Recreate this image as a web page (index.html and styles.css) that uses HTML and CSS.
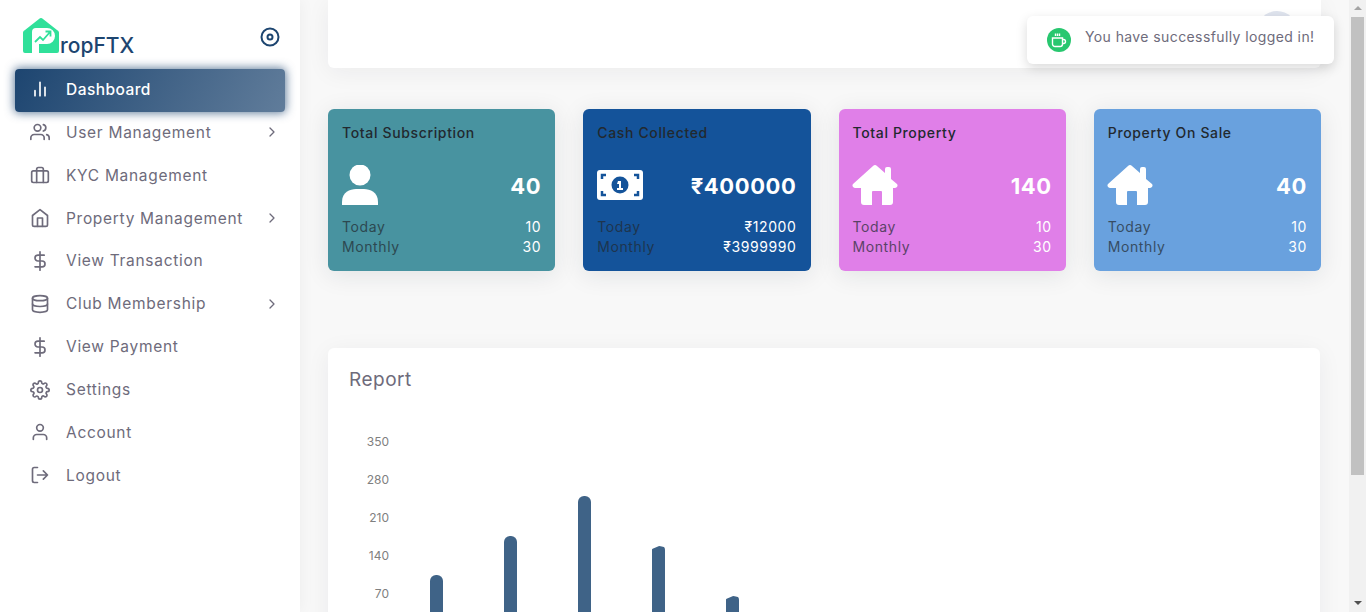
FILE: index.html
```html
<!DOCTYPE html>
<html lang="en">
  <head>
    <meta charset="UTF-8" />
    <title>PropFTX Dashboard</title>
    <link rel="stylesheet" href="styles.css">
  </head>
  <body>
    <aside class="sidebar">
      <div class="brand">
        <div class="logo">
          <svg class="logo-mark" viewBox="0 0 36 35" width="36" height="35">
            <path fill="#30e09a" d="M16 1a3 3 0 0 1 4 0l14 11a3 3 0 0 1 2 3v18a2 2 0 0 1-2 2H2a2 2 0 0 1-2-2V15a3 3 0 0 1 2-3z"/>
            <path fill="#fff" d="M9 14a4 4 0 0 1 4-4h11a8 8 0 0 1 8 8 8 8 0 0 1-8 8h-8v9H9z"/>
            <path fill="none" stroke="#30e09a" stroke-width="1.800" d="M12 24l5-5 3 3 7-8M22.500 13.500h5v5"/>
          </svg>
          <span class="logo-text">ropFTX</span>
        </div>
        <svg class="toggle" viewBox="0 0 20 20" width="20" height="20" fill="none" stroke="#1d4570" stroke-width="2">
          <circle cx="10" cy="10" r="8.500"/>
          <circle cx="10" cy="10" r="2.500"/>
        </svg>
      </div>
      <nav class="menu">
        <a class="item active">
          <svg viewBox="0 0 24 24"><path d="M18 20V10M12 20V4M6 20v-6"/></svg>
          <span>Dashboard</span>
        </a>
        <a class="item">
          <svg viewBox="0 0 24 24"><path d="M17 21v-2a4 4 0 0 0-4-4H5a4 4 0 0 0-4 4v2"/><circle cx="9" cy="7" r="4"/><path d="M23 21v-2a4 4 0 0 0-3-3.870M16 3.130a4 4 0 0 1 0 7.750"/></svg>
          <span>User Management</span>
          <svg class="chev" viewBox="0 0 10 10"><path d="M3 1l4 4-4 4"/></svg>
        </a>
        <a class="item">
          <svg viewBox="0 0 24 24"><rect x="2" y="7" width="20" height="14" rx="2"/><path d="M16 21V5a2 2 0 0 0-2-2h-4a2 2 0 0 0-2 2v16"/></svg>
          <span>KYC Management</span>
        </a>
        <a class="item">
          <svg viewBox="0 0 24 24"><path d="M3 9l9-7 9 7v11a2 2 0 0 1-2 2H5a2 2 0 0 1-2-2z"/><path d="M9 22V12h6v10"/></svg>
          <span>Property Management</span>
          <svg class="chev" viewBox="0 0 10 10"><path d="M3 1l4 4-4 4"/></svg>
        </a>
        <a class="item">
          <svg viewBox="0 0 24 24"><path d="M12 1v22M17 5H9.500a3.500 3.500 0 0 0 0 7h5a3.500 3.500 0 0 1 0 7H6"/></svg>
          <span>View Transaction</span>
        </a>
        <a class="item">
          <svg viewBox="0 0 24 24"><ellipse cx="12" cy="5" rx="9" ry="3"/><path d="M21 12c0 1.660-4 3-9 3s-9-1.340-9-3"/><path d="M3 5v14c0 1.660 4 3 9 3s9-1.340 9-3V5"/></svg>
          <span>Club Membership</span>
          <svg class="chev" viewBox="0 0 10 10"><path d="M3 1l4 4-4 4"/></svg>
        </a>
        <a class="item">
          <svg viewBox="0 0 24 24"><path d="M12 1v22M17 5H9.500a3.500 3.500 0 0 0 0 7h5a3.500 3.500 0 0 1 0 7H6"/></svg>
          <span>View Payment</span>
        </a>
        <a class="item">
          <svg viewBox="0 0 24 24"><circle cx="12" cy="12" r="3"/><path d="M19.400 15a1.650 1.650 0 0 0 .33 1.820l.06.06a2 2 0 0 1 0 2.830 2 2 0 0 1-2.830 0l-.06-.06a1.650 1.650 0 0 0-1.820-.33 1.650 1.650 0 0 0-1 1.510V21a2 2 0 0 1-2 2 2 2 0 0 1-2-2v-.09A1.650 1.650 0 0 0 9 19.400a1.650 1.650 0 0 0-1.820.33l-.06.06a2 2 0 0 1-2.830 0 2 2 0 0 1 0-2.830l.06-.06a1.650 1.650 0 0 0 .33-1.820 1.650 1.650 0 0 0-1.510-1H3a2 2 0 0 1-2-2 2 2 0 0 1 2-2h.09A1.650 1.650 0 0 0 4.600 9a1.650 1.650 0 0 0-.33-1.820l-.06-.06a2 2 0 0 1 0-2.830 2 2 0 0 1 2.830 0l.06.06a1.650 1.650 0 0 0 1.820.33H9a1.650 1.650 0 0 0 1-1.510V3a2 2 0 0 1 2-2 2 2 0 0 1 2 2v.09a1.650 1.650 0 0 0 1 1.510 1.650 1.650 0 0 0 1.820-.33l.06-.06a2 2 0 0 1 2.830 0 2 2 0 0 1 0 2.830l-.06.06a1.650 1.650 0 0 0-.33 1.820V9a1.650 1.650 0 0 0 1.510 1H21a2 2 0 0 1 2 2 2 2 0 0 1-2 2h-.09a1.650 1.650 0 0 0-1.510 1z"/></svg>
          <span>Settings</span>
        </a>
        <a class="item">
          <svg viewBox="0 0 24 24"><path d="M20 21v-2a4 4 0 0 0-4-4H8a4 4 0 0 0-4 4v2"/><circle cx="12" cy="7" r="4"/></svg>
          <span>Account</span>
        </a>
        <a class="item">
          <svg viewBox="0 0 24 24"><path d="M9 21H5a2 2 0 0 1-2-2V5a2 2 0 0 1 2-2h4M16 17l5-5-5-5M21 12H9"/></svg>
          <span>Logout</span>
        </a>
      </nav>
    </aside>

    <main class="content">
      <div class="topbar"><span class="avatar"></span></div>

      <section class="cards">
        <div class="card teal">
          <h4>Total Subscription</h4>
          <div class="card-main">
            <svg class="card-icon" viewBox="0 0 36 40" width="36" height="40" fill="#fff">
              <circle cx="18" cy="10" r="10.500"/>
              <path d="M0 40v-3c0-10 8-13 14-13h8c6 0 14 3 14 13v3z"/>
            </svg>
            <span class="total">40</span>
          </div>
          <div class="row"><span>Today</span><b>10</b></div>
          <div class="row"><span>Monthly</span><b>30</b></div>
        </div>
        <div class="card navy">
          <h4>Cash Collected</h4>
          <div class="card-main">
            <svg class="card-icon" viewBox="0 0 46 30" width="46" height="30">
              <rect width="46" height="30" rx="3" fill="#fff"/>
              <circle cx="23" cy="15" r="8.500" fill="#14539a"/>
              <path d="M5 9V5h4M41 9V5h-4M5 21v4h4M41 21v4h-4" fill="none" stroke="#14539a" stroke-width="2.500"/>
              <path d="M21 11h3v7h2v2h-6v-2h2v-4h-2z" fill="#fff"/>
            </svg>
            <span class="total">₹400000</span>
          </div>
          <div class="row"><span>Today</span><b>₹12000</b></div>
          <div class="row"><span>Monthly</span><b>₹3999990</b></div>
        </div>
        <div class="card pink">
          <h4>Total Property</h4>
          <div class="card-main">
            <svg class="card-icon house" viewBox="0 0 46 40" width="46" height="40" fill="#fff">
              <path d="M21 1a3 3 0 0 1 4 0l8 7V4a2 2 0 0 1 2-2h2a2 2 0 0 1 2 2v10l6 5a2.500 2.500 0 0 1-2 4h-2v14a3 3 0 0 1-3 3h-8V27a1 1 0 0 0-1-1h-8a1 1 0 0 0-1 1v13H12a3 3 0 0 1-3-3V23H3a2.500 2.500 0 0 1-2-4z"/>
            </svg>
            <span class="total">140</span>
          </div>
          <div class="row"><span>Today</span><b>10</b></div>
          <div class="row"><span>Monthly</span><b>30</b></div>
        </div>
        <div class="card sky">
          <h4>Property On Sale</h4>
          <div class="card-main">
            <svg class="card-icon house" viewBox="0 0 46 40" width="46" height="40" fill="#fff">
              <path d="M21 1a3 3 0 0 1 4 0l8 7V4a2 2 0 0 1 2-2h2a2 2 0 0 1 2 2v10l6 5a2.500 2.500 0 0 1-2 4h-2v14a3 3 0 0 1-3 3h-8V27a1 1 0 0 0-1-1h-8a1 1 0 0 0-1 1v13H12a3 3 0 0 1-3-3V23H3a2.500 2.500 0 0 1-2-4z"/>
            </svg>
            <span class="total">40</span>
          </div>
          <div class="row"><span>Today</span><b>10</b></div>
          <div class="row"><span>Monthly</span><b>30</b></div>
        </div>
      </section>

      <section class="report">
        <h3>Report</h3>
        <div class="chart">
          <div class="axis">
            <span>350</span>
            <span>280</span>
            <span>210</span>
            <span>140</span>
            <span>70</span>
          </div>
          <div class="bars">
            <div class="bar" style="height:57px"></div>
            <div class="bar" style="height:96px"></div>
            <div class="bar" style="height:136px"></div>
            <div class="bar slant" style="height:86px"></div>
            <div class="bar slant" style="height:36px"></div>
          </div>
        </div>
      </section>
    </main>

    <div class="toast">
      <span class="toast-icon">
        <svg viewBox="0 0 18 18" width="18" height="18" fill="none" stroke="#fff" stroke-width="1.400">
          <path d="M2.500 7h10v6a2.500 2.500 0 0 1-2.500 2.500H5A2.500 2.500 0 0 1 2.500 13zM12.500 8.500h1a2 2 0 0 1 0 4h-1M5.500 2.500V5M7.500 2.500V5M9.500 2.500V5"/>
        </svg>
      </span>
      You have successfully logged in!
    </div>

    <div class="scrollbar">
      <span class="arrow up"></span>
      <span class="thumb"></span>
      <span class="arrow down"></span>
    </div>
  </body>
</html>
```

FILE: styles.css
```css
:root {
  --navy: #1d4570;
  --text-muted: #6e6b7b;
  --page: #f8f8f8;
  --font-family: 'Inter', 'Noto Sans', sans-serif;
}

* {
  box-sizing: border-box;
}

html,
body {
  height: 612px;
  overflow: hidden;
}

body {
  margin: 0;
  display: flex;
  font-family: var(--font-family);
  background: var(--page);
  color: var(--text-muted);
}

/* sidebar */
.sidebar {
  flex: 0 0 300px;
  height: 612px;
  background: #fff;
  padding: 0 15px;
  box-shadow: 0 0 15px rgba(34, 41, 47, 0.05);
}

.brand {
  height: 69px;
  display: flex;
  align-items: flex-start;
  justify-content: space-between;
  padding: 18px 5px 0 8px;
}

.logo {
  display: flex;
  align-items: flex-end;
  height: 35px;
}

.logo-mark {
  display: block;
  flex: none;
}

.logo-text {
  font-size: 21px;
  font-weight: 500;
  line-height: 24px;
  letter-spacing: 0;
  color: var(--navy);
  margin: 0 0 -5px 1px;
}

.toggle {
  margin-top: 9px;
}

.menu {
  display: flex;
  flex-direction: column;
}

.item {
  height: 42.875px;
  display: flex;
  align-items: center;
  padding: 0 8px 2px 15px;
  font-size: 15.500px;
  letter-spacing: 0.7px;
  color: var(--text-muted);
}

.item svg {
  flex: none;
  width: 20px;
  height: 20px;
  margin-right: 16px;
  fill: none;
  stroke: currentColor;
  stroke-width: 2;
  stroke-linecap: round;
  stroke-linejoin: round;
}

.item span {
  flex: 1;
  white-space: nowrap;
}

.item .chev {
  width: 10px;
  height: 10px;
  margin: 0;
  stroke-width: 1.300;
}

.item.active {
  color: #fff;
  font-weight: 500;
  letter-spacing: 0.45px;
  border-radius: 4px;
  background: linear-gradient(118deg, #1d4570, rgba(29, 69, 112, 0.7));
  box-shadow: 0 0 10px 1px rgba(29, 69, 112, 0.7);
}

/* main column */
.content {
  flex: 1;
  min-width: 0;
  padding: 0 45px 0 28px;
}

.topbar {
  height: 68px;
  background: #fff;
  border-radius: 0 0 6px 6px;
  box-shadow: 0 4px 24px rgba(34, 41, 47, 0.06);
  display: flex;
  justify-content: flex-end;
  padding: 11px 24px 0 0;
}

.avatar {
  width: 40px;
  height: 40px;
  border-radius: 50%;
  background: #dfe4ee;
}

.cards {
  display: grid;
  grid-template-columns: repeat(4, 1fr);
  gap: 28px;
  margin-top: 41px;
}

.card {
  height: 162px;
  padding: 15px 14px 0;
  border-radius: 6px;
  color: #fff;
  box-shadow: 0 4px 24px rgba(34, 41, 47, 0.1);
}

.card h4 {
  margin: 0;
  font-size: 14px;
  line-height: 18px;
  font-weight: 500;
  letter-spacing: 0.65px;
  color: #22292f;
}

.teal { background: #4893a0; }
.navy { background: #14539a; }
.pink { background: #e07fe8; }
.sky { background: #69a1de; }

.card-main {
  height: 40px;
  margin-top: 23px;
  display: flex;
  align-items: center;
  justify-content: space-between;
}

.house {
  margin-left: -1px;
}

.total {
  font-size: 22px;
  font-weight: 700;
  letter-spacing: 0.6px;
  padding-top: 2px;
}

.row {
  display: flex;
  justify-content: space-between;
  font-size: 14px;
  line-height: 20px;
  letter-spacing: 0.6px;
}

.card-main + .row {
  margin-top: 12px;
}

.row span {
  color: #22292f;
  opacity: 0.7;
}

.row b {
  font-weight: 400;
}

/* report card */
.report {
  margin-top: 77px;
  height: 300px;
  margin-right: 1px;
  background: #fff;
  border-radius: 6px;
  padding: 20px 21px;
  box-shadow: 0 4px 24px rgba(34, 41, 47, 0.06);
}

.report h3 {
  margin: 0;
  font-size: 19px;
  line-height: 24px;
  font-weight: 400;
  letter-spacing: 0.5px;
  color: var(--text-muted);
}

.chart {
  display: flex;
  margin-top: 42px;
  height: 198px;
}

.axis {
  flex: 0 0 40px;
  display: flex;
  flex-direction: column;
  gap: 22px;
  text-align: right;
  font-size: 12px;
  line-height: 16px;
  color: #808080;
}

.bars {
  flex: 1;
  display: flex;
  align-items: flex-end;
  gap: 61px;
  padding-left: 41px;
}

.bar {
  width: 13px;
  background: #3f6387;
  border-radius: 6px 6px 0 0;
}

.bar.slant {
  border-radius: 4px 4px 0 0;
  clip-path: polygon(0 3px, 55% 0, 100% 1px, 100% 100%, 0 100%);
}

/* overlays */
.toast {
  position: absolute;
  top: 16px;
  left: 1027px;
  width: 307px;
  height: 48px;
  display: flex;
  align-items: center;
  gap: 14px;
  padding: 0 0 8px 20px;
  background: #fff;
  border-radius: 6px;
  font-size: 14px;
  letter-spacing: 0.4px;
  white-space: nowrap;
  box-shadow: 0 4px 12px rgba(0, 0, 0, 0.15);
}

.toast-icon {
  width: 24px;
  height: 24px;
  flex: none;
  display: flex;
  align-items: center;
  justify-content: center;
  border-radius: 50%;
  background: #28c76f;
  margin-top: 8px;
}

.scrollbar {
  position: absolute;
  top: 0;
  right: 0;
  width: 17px;
  height: 612px;
  background: #f1f1f1;
  display: flex;
  flex-direction: column;
  align-items: center;
}

.thumb {
  width: 13px;
  height: 458px;
  background: #c1c1c1;
}

.arrow {
  width: 0;
  height: 0;
  border-left: 4px solid transparent;
  border-right: 4px solid transparent;
  margin: 6px 0 7px;
}

.arrow.up {
  border-bottom: 4px solid #a3a3a3;
}

.arrow.down {
  margin-top: auto;
  border-top: 4px solid #505050;
}
```
